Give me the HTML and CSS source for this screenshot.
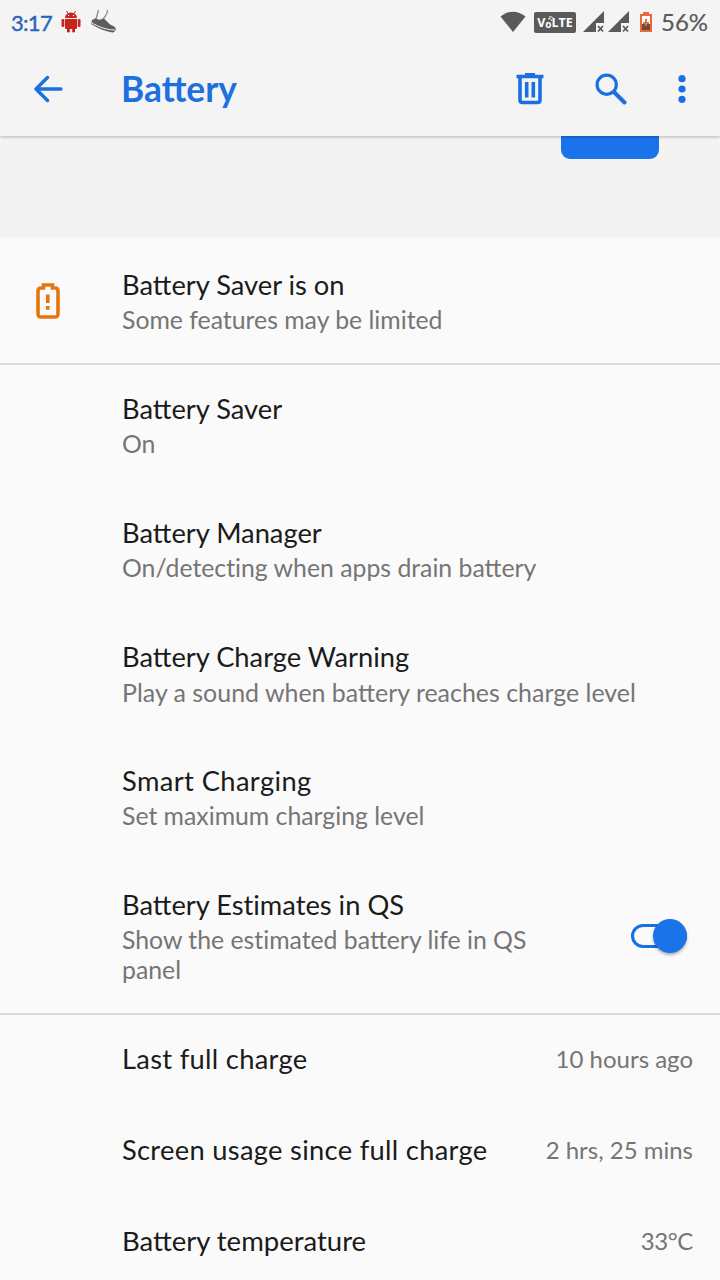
FILE: index.html
```html
<!DOCTYPE html>
<html lang="en">
<head>
<meta charset="utf-8">
<title>Battery</title>
<link rel="stylesheet" href="styles.css">
</head>
<body>
<header class="header">
  <div class="status">
    <span class="clock">3:17</span>
    <svg class="droid" width="20" height="24" viewBox="0 0 20 24" fill="#c9211e"><path d="M4 8a6 5.6 0 0 1 12 0zM4 9h12v9a1 1 0 0 1-1 1H5a1 1 0 0 1-1-1z"/><rect x="0.5" y="9" width="2.8" height="8" rx="1.3"/><rect x="16.7" y="9" width="2.8" height="8" rx="1.3"/><rect x="6" y="17" width="2.8" height="5.6" rx="1.3"/><rect x="11.2" y="17" width="2.8" height="5.6" rx="1.3"/><path d="M5.5 1l2 3M14.500 1l-2 3" stroke="#c9211e"/><circle cx="7.500" cy="5.500" r=".7" fill="#fff"/><circle cx="12.500" cy="5.500" r=".7" fill="#fff"/></svg>
    <svg class="shoe" width="26" height="24" viewBox="0 0 26 24"><path d="M1 10L5 8c2 2.500 5 2 7.500 0l6 6c3 2 5 2 6 4 1 2-1 4.500-3 4.500C14 21.500 7 18 0 14z" fill="#5c5c5c"/><path d="M0 12.500c7 4 15 7.500 24 7.500" fill="none" stroke="#f4f4f4" stroke-width="1"/><path d="M7.500 0L5 9M16.500 0q0 4-4 8.500" fill="none" stroke="#8b8b8b" stroke-width="1.300"/></svg>
    <span class="spacer"></span>
    <svg class="wifi" width="26" height="22" viewBox="0 0 26 22"><path d="M.5 5.500C8-1 18-1 25.500 5.500L13 21z" fill="#5a5a5a"/></svg>
    <span class="volte">V<span class="volte-o">o<svg class="waves" width="7" height="6" viewBox="0 0 7 6"><path d="M0 3q2-2 4 2M1 1q4-1 5 3" fill="none" stroke="#fff"/></svg></span>LTE</span>
    <svg class="signal" width="46" height="22" viewBox="0 0 46 22"><g id="s" fill="#5a5a5a"><path d="M0 21L21 0v12h-8v9z"/><path d="M15 15l5 5.500M20 15l-5 5.500" stroke="#5a5a5a" stroke-width="1.800"/></g><use href="#s" x="25"/></svg>
    <svg class="cell" width="14" height="22" viewBox="0 0 14 22"><path d="M4 1h6v2h3v18H1V3h3z" fill="#e8693b"/><path d="M3 5h8v14H3z" fill="#fff"/><path d="M3 13h8v6H3z" fill="#6a4c43"/><path d="M7 8v7M4 12h6" stroke="#e8693b" stroke-width="2"/></svg>
    <span class="percent">56%</span>
  </div>
  <div class="appbar">
    <svg class="back" width="30" height="28" viewBox="0 0 30 28"><path d="M27 14H3M13.500 2.500L2 14 13.500 25.500" fill="none" stroke="#1c71df" stroke-width="3.400" stroke-linecap="round" stroke-linejoin="round"/></svg>
    <h1 class="heading">Battery</h1>
    <svg class="trash" width="28" height="32" viewBox="0 0 28 32" fill="none" stroke="#1a70e2"><path d="M.5 3.500h27" stroke-width="3.500"/><path d="M9 1.500h10" stroke-width="3"/><path d="M4 4v23q0 2.500 2.500 2.500h15q2.500 0 2.500-2.500V4" stroke-width="3.600"/><path d="M10.700 9v15.500M17.300 9v15.500" stroke-width="3.600"/></svg>
    <svg class="search" width="32" height="32" viewBox="0 0 32 32" fill="none" stroke="#1a70e2"><circle cx="11.700" cy="11.700" r="9.600" stroke-width="3.200"/><path d="M20 20l9.500 9.500" stroke-width="4" stroke-linecap="round"/></svg>
    <svg class="more" width="8" height="28" viewBox="0 0 8 28" fill="#1a70e2"><circle cx="4" cy="3.700" r="3.600"/><circle cx="4" cy="14" r="3.600"/><circle cx="4" cy="24.300" r="3.600"/></svg>
  </div>
</header>
<div class="banner"><div class="button"></div></div>
<main class="list">
  <section class="group">
    <div class="row">
      <svg class="lead" width="24" height="36" viewBox="0 0 24 36"><path d="M7.500 5V2h9v3H19q3 0 3 3v23q0 3-3 3H5q-3 0-3-3V8q0-3 3-3z" fill="none" stroke="#e67510" stroke-width="3.600"/><path d="M11.800 11.500v8.500M11.800 23v3.800" stroke="#e67510" stroke-width="3.600"/></svg>
      <div class="text"><div class="title">Battery Saver is on</div><div class="sub">Some features may be limited</div></div>
    </div>
  </section>
  <section class="group">
    <div class="row"><div class="text"><div class="title">Battery Saver</div><div class="sub">On</div></div></div>
    <div class="row"><div class="text"><div class="title">Battery Manager</div><div class="sub">On/detec<span class="plain">ti</span>ng when apps drain battery</div></div></div>
    <div class="row"><div class="text"><div class="title">Battery Charge Warning</div><div class="sub long">Play a sound when battery reaches charge level</div></div></div>
    <div class="row"><div class="text"><div class="title wide">Smart Charging</div><div class="sub">Set maximum charging level</div></div></div>
    <div class="row"><div class="text"><div class="title">Battery Es<span class="plain">ti</span>mates in QS</div><div class="sub">Show the es<span class="plain">ti</span>mated battery life in QS<br>panel</div></div><div class="switch"><div class="thumb"></div></div></div>
  </section>
  <section class="group">
    <div class="stat"><span class="title open">Last full charge</span><span class="sub">10 hours ago</span></div>
    <div class="stat"><span class="title open">Screen usage since full charge</span><span class="sub">2 hrs, 25 mins</span></div>
    <div class="stat"><span class="title temp">Battery temperature</span><span class="sub degrees">33°C</span></div>
  </section>
</main>
</body>
</html>
```
FILE: styles.css
```css
* { box-sizing: border-box; }
body { margin: 0; width: 720px; height: 1280px; overflow: hidden; background: #fafafa; font-family: Lato, "Open Sans", sans-serif; }
svg { display: block; flex: none; }
.header { position: relative; z-index: 1; height: 136px; background: #f4f4f4; box-shadow: 0 1px 3px rgba(0,0,0,.25); }
.status { display: flex; align-items: center; height: 44px; padding: 0 11px; }
.clock { width: 41px; font-size: 22px; color: #2865b8; letter-spacing: -.7px; -webkit-text-stroke: .4px; }
.droid { margin-left: 9px; }
.shoe { margin-left: 10px; }
.spacer { flex: 1; }
.volte { display: flex; align-items: center; justify-content: center; width: 42px; height: 21px; margin-left: 8px; border-radius: 2px; background: #5a5a5a; color: #fff; font: bold 12.5px "Open Sans", sans-serif; }
.volte-o { position: relative; padding-top: 3px; font-size: 10px; }
.waves { position: absolute; left: 3px; top: 2px; }
.signal { margin-left: 7px; }
.cell { margin-left: 10px; }
.percent { width: 48px; margin-left: 8px; font-size: 24px; line-height: 42px; color: #5a5a5a; -webkit-text-stroke: .2px; white-space: nowrap; }
.appbar { display: flex; align-items: center; height: 90px; padding: 0 34px 1px; }
.heading { flex: 1; margin: 0 0 0 57px; font-size: 35.3px; font-weight: 700; line-height: 48px; color: #1c71df; }
.search { margin-left: 51px; }
.more { margin-left: 51px; }
.banner { height: 102px; padding-left: 561px; background: #f3f3f3; }
.button { width: 98px; height: 23px; border-radius: 0 0 9px 9px; background: #1a73e8; }
.list { padding-top: 2px; }
.group + .group { box-shadow: inset 0 1px #dadada, 0 -1px #dadada; }
.row { display: flex; position: relative; padding: 27px 33px 29px 122px; }
.lead { position: absolute; left: 36px; top: 43px; }
.text { flex: 1; }
.title { display: block; font-size: 27.3px; line-height: 36px; color: #1b1b1b; white-space: nowrap; }
.open { letter-spacing: .3px; }
.wide { letter-spacing: .4px; }
.temp { font-size: 27.5px; }
.sub { display: block; font-size: 24px; line-height: 30px; color: #757575; white-space: nowrap; }
.degrees { letter-spacing: -.4px; }
.text .sub { margin-top: 2px; font-size: 24.8px; }
.text .long { font-size: 24.95px; }
.plain { font-variant-ligatures: none; }
.stat { display: flex; align-items: center; justify-content: space-between; height: 91px; padding: 0 27px 1px 122px; }
.switch { position: relative; align-self: center; width: 56px; height: 24px; border: 3px solid #1a70e2; border-radius: 12px; }
.thumb { position: absolute; right: -3px; top: -8px; width: 34px; height: 34px; border-radius: 50%; background: #1a73e8; box-shadow: 0 2px 3px rgba(0,0,0,.3); }
```
